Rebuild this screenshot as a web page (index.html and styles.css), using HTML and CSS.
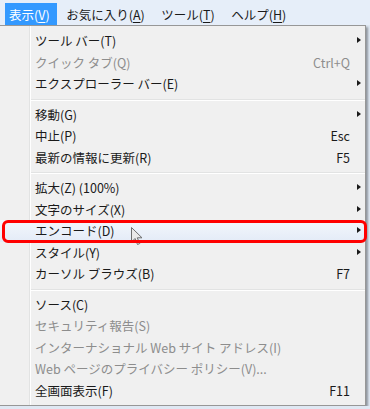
FILE: index.html
```html
<!DOCTYPE html>
<html lang="ja">
<head>
    <meta charset="UTF-8">
    <title>表示メニュー</title>
    <link rel="stylesheet" href="styles.css">
</head>
<body>
    <div class="menubar">
        <span class="top-item active">表示(<u>V</u>)</span>
        <span class="top-item">お気に入り(<u>A</u>)</span>
        <span class="top-item">ツール(<u>T</u>)</span>
        <span class="top-item">ヘルプ(<u>H</u>)</span>
    </div>

    <div class="menu">
        <div class="row"><span class="label">ツール バー(T)</span><span class="key"></span><span class="arrow"></span></div>
        <div class="row disabled"><span class="label">クイック タブ(Q)</span><span class="key">Ctrl+Q</span><span class="noarrow"></span></div>
        <div class="row"><span class="label">エクスプローラー バー(E)</span><span class="key"></span><span class="arrow"></span></div>
        <div class="sep"></div>
        <div class="row"><span class="label">移動(G)</span><span class="key"></span><span class="arrow"></span></div>
        <div class="row"><span class="label">中止(P)</span><span class="key">Esc</span><span class="noarrow"></span></div>
        <div class="row"><span class="label">最新の情報に更新(R)</span><span class="key">F5</span><span class="noarrow"></span></div>
        <div class="sep"></div>
        <div class="row"><span class="label">拡大(Z) (100%)</span><span class="key"></span><span class="arrow"></span></div>
        <div class="row"><span class="label">文字のサイズ(X)</span><span class="key"></span><span class="arrow"></span></div>
        <div class="row hover">
            <span class="label">エンコード(D)</span><span class="key"></span><span class="arrow"></span>
            <svg class="cursor" width="12" height="19" viewBox="0 0 12 19">
                <path d="M0.5 0.5 L0.5 15 L4 11.5 L6.5 17.5 L8.8 16.5 L6.3 10.8 L11 10.8 Z" fill="#e9e9e9" stroke="#6e6e6e" stroke-width="1"/>
            </svg>
        </div>
        <div class="row"><span class="label">スタイル(Y)</span><span class="key"></span><span class="arrow"></span></div>
        <div class="row"><span class="label">カーソル ブラウズ(B)</span><span class="key">F7</span><span class="noarrow"></span></div>
        <div class="sep"></div>
        <div class="row"><span class="label">ソース(C)</span><span class="key"></span><span class="noarrow"></span></div>
        <div class="row disabled"><span class="label">セキュリティ報告(S)</span><span class="key"></span><span class="noarrow"></span></div>
        <div class="row disabled"><span class="label">インターナショナル Web サイト アドレス(I)</span><span class="key"></span><span class="noarrow"></span></div>
        <div class="row disabled"><span class="label">Web ページのプライバシー ポリシー(V)...</span><span class="key"></span><span class="noarrow"></span></div>
        <div class="row"><span class="label">全画面表示(F)</span><span class="key">F11</span><span class="noarrow"></span></div>
    </div>
</body>
</html>
```

FILE: styles.css
```css
/* ==================================== */
/* 基本                                  */
/* ==================================== */
body {
    margin: 0;
    padding: 0;
    font-family: "Noto Sans CJK JP", "Noto Sans", sans-serif;
    font-size: 12.5px;
    color: #1a1a1a;
    background-color: #dfe8f3;
    overflow: hidden;
}

/* ==================================== */
/* メニューバー                          */
/* ==================================== */
.menubar {
    height: 25px;
    display: flex;
    align-items: stretch;
    padding-left: 5px;
    padding-top: 3px;
    background-color: #e6eef9;
    box-sizing: border-box;
}

.top-item {
    display: flex;
    align-items: center;
    padding: 0 7px 0 4px;
    margin-right: 5.5px;
    white-space: nowrap;
}

.top-item.active {
    background-color: #3399ff;
    color: #fff;
}

.top-item u {
    text-decoration-thickness: 1px;
    text-underline-offset: 2px;
}

/* ==================================== */
/* ドロップダウン                        */
/* ==================================== */
.menu {
    width: 366px;
    background-color: #f0f0f0;
    border: 1px solid #979797;
    border-left: none;
    box-sizing: border-box;
    padding: 4px 0 4px 0;
    box-shadow: 2px 2px 2px rgba(0, 0, 0, 0.35);
    /* 左側のアイコン列と区切り線 */
    background-image: linear-gradient(90deg, transparent 29px, #e2e3e3 29px, #e2e3e3 30px, #ffffff 30px, #ffffff 31px, transparent 31px);
}

.row {
    position: relative;
    height: 21.5px;
    display: flex;
    align-items: center;
    padding-left: 35px;
    white-space: nowrap;
}

.row .label {
    flex: 1;
}

.row .key {
    text-align: right;
}

.row .arrow,
.row .noarrow {
    width: 15px;
    height: 100%;
    position: relative;
}

.row .arrow::before {
    content: '';
    position: absolute;
    left: 7px;
    top: 7px;
    border-left: 4px solid #1a1a1a;
    border-top: 3.5px solid transparent;
    border-bottom: 3.5px solid transparent;
}

.row.disabled {
    color: #8d8d8d;
}

.sep {
    height: 9px;
    margin-left: 31px;
    background-image: linear-gradient(#e2e3e3, #e2e3e3), linear-gradient(#ffffff, #ffffff);
    background-size: 100% 1px, 100% 1px;
    background-position: 0 4px, 0 5px;
    background-repeat: no-repeat;
}

/* ==================================== */
/* 選択中の行と赤枠                      */
/* ==================================== */
.row.hover {
    background: linear-gradient(#f4f7fc, #e3ebf7);
}

.row.hover::after {
    content: '';
    position: absolute;
    left: 2px;
    right: -2px;
    top: 0;
    bottom: -1px;
    border: 3px solid #ff0000;
    border-radius: 6px;
}

.cursor {
    position: absolute;
    left: 131px;
    top: 7px;
}
```
